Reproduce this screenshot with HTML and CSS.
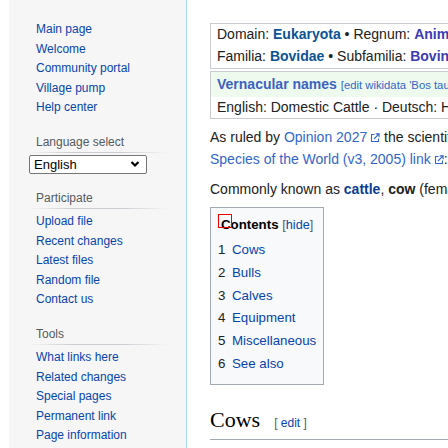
FILE: index.html
```html
<!DOCTYPE html>
<html lang="en">
<head>
<meta charset="utf-8">
<title>Bos taurus</title>
<link rel="stylesheet" href="styles.css">
</head>
<body>
<div class="page">
  <div class="gutter"></div>
  <nav class="sidebar">
    <ul class="links first">
      <li><a href="#">Main page</a></li>
      <li><a href="#">Welcome</a></li>
      <li><a href="#">Community portal</a></li>
      <li><a href="#">Village pump</a></li>
      <li><a href="#">Help center</a></li>
    </ul>
    <div class="portal">
      <h3>Language select</h3>
      <div class="select"><span>English</span><svg class="chev" width="10" height="8" viewBox="0 0 10 8"><polyline points="1.5,2 5,5.5 8.5,2" fill="none" stroke="#000" stroke-width="2.2"/></svg></div>
    </div>
    <div class="portal">
      <h3>Participate</h3>
      <ul class="links">
        <li><a href="#">Upload file</a></li>
        <li><a href="#">Recent changes</a></li>
        <li><a href="#">Latest files</a></li>
        <li><a href="#">Random file</a></li>
        <li><a href="#">Contact us</a></li>
      </ul>
    </div>
    <div class="portal">
      <h3>Tools</h3>
      <ul class="links">
        <li><a href="#">What links here</a></li>
        <li><a href="#">Related changes</a></li>
        <li><a href="#">Special pages</a></li>
        <li><a href="#">Permanent link</a></li>
        <li><a href="#">Page information</a></li>
      </ul>
    </div>
  </nav>
  <main class="content">
    <div class="taxo">
      <div class="line">Domain: <a class="tx" href="#">Eukaryota</a> • Regnum: <a class="tx v" href="#">Animalia</a> • Phylum: <a class="tx" href="#">Chordata</a> • Classis: <a class="tx" href="#">Mammalia</a></div>
      <div class="line">Familia: <a class="tx" href="#">Bovidae</a> • Subfamilia: <a class="tx v" href="#">Bovinae</a> • Tribus: <a class="tx" href="#">Bovini</a> • Genus: <a class="tx" href="#">Bos</a></div>
    </div>
    <div class="vn">
      <div class="vn-head"><span class="vn-title">Vernacular names</span> <span class="vn-edit">[edit wikidata 'Bos taurus']</span></div>
      <div class="vn-body">English: Domestic Cattle · Deutsch: Hausrind · Español: Vaca doméstica</div>
    </div>
    <p class="para">As ruled by <a class="ext" href="#">Opinion 2027<svg class="exticon" width="10" height="10" viewBox="0 0 10 10"><path d="M4.5 1.5H1.5v7h7V5.5" fill="none" stroke="#36c" stroke-width="1.1"/><path d="M4 6L8.8 1.2M5.8 0.9h3.3v3.3" fill="none" stroke="#36c" stroke-width="1.1"/></svg></a> the scientific name of the domestic cattle is, according to Mammal<br><a class="ext" href="#">Species of the World (v3, 2005) link<svg class="exticon" width="10" height="10" viewBox="0 0 10 10"><path d="M4.5 1.5H1.5v7h7V5.5" fill="none" stroke="#36c" stroke-width="1.1"/><path d="M4 6L8.8 1.2M5.8 0.9h3.3v3.3" fill="none" stroke="#36c" stroke-width="1.1"/></svg></a>: Bos taurus</p>
    <p class="para">Commonly known as <a class="strong" href="#">cattle</a>, <b>cow</b> (female), bull (male) or calf (young).</p>
    <div class="toc">
      <span class="toc-focus"></span>
      <div class="toc-title"><b>Contents</b> <span class="toc-hide">[<a href="#">hide</a>]</span></div>
      <ul class="toc-list">
        <li><span class="num">1</span><a href="#">Cows</a></li>
        <li><span class="num">2</span><a href="#">Bulls</a></li>
        <li><span class="num">3</span><a href="#">Calves</a></li>
        <li><span class="num">4</span><a href="#">Equipment</a></li>
        <li><span class="num">5</span><a href="#">Miscellaneous</a></li>
        <li><span class="num">6</span><a href="#">See also</a></li>
      </ul>
    </div>
    <h2 class="section">Cows<span class="editsection">[ <a href="#">edit</a> ]</span></h2>
  </main>
</div>
</body>
</html>
```
FILE: styles.css
```css
html, body {
  margin: 0;
  padding: 0;
  overflow: hidden;
  background: #fff;
}
body {
  font-family: "Liberation Sans", Arial, sans-serif;
  color: #202122;
}
a {
  color: #0645ad;
  text-decoration: none;
}
.page {
  display: flex;
  width: 1100px;
  min-height: 448px;
}
.gutter {
  width: 9px;
  flex: none;
  background: #fff;
}
.sidebar {
  width: 177px;
  flex: none;
  background: #f6f6f6;
  padding: 20px 0 0 19px;
  box-sizing: border-box;
  font-size: 12px;
}
.links {
  list-style: none;
  margin: 0;
  padding: 0 0 0 8px;
}
.links li {
  line-height: 19.5px;
  white-space: nowrap;
}
.portal {
  width: 140px;
  margin-top: 16px;
}
.portal h3 {
  margin: 0;
  font-size: 12px;
  font-weight: normal;
  color: #54595d;
  line-height: 16px;
  padding: 0 0 2px 8px;
  background-image: linear-gradient(to right, rgba(200,204,209,0) 0, #c8ccd1 33%, #c8ccd1 66%, rgba(200,204,209,0) 100%);
  background-repeat: no-repeat;
  background-position: bottom left;
  background-size: 100% 1px;
  padding-bottom: 3px;
}
.portal .links {
  margin-top: 3.5px;
}
.select {
  margin: 2px 0 0 1px;
  width: 118px;
  height: 19px;
  box-sizing: border-box;
  border: 1px solid #767676;
  border-radius: 2px;
  background: #fff;
  display: flex;
  align-items: center;
  justify-content: space-between;
  padding: 0 6px 0 4px;
  font-size: 13px;
  color: #000;
}
.chev {
  display: block;
}
.content {
  flex: none;
  width: 880px;
  border-left: 1px solid #a7d7f9;
  padding: 23px 0 0 23px;
  font-size: 14px;
  background: #fff;
}
.taxo {
  border: 1px solid #c8ccd1;
  padding: 0 6px 1px;
}
.taxo .line {
  line-height: 21.5px;
  white-space: nowrap;
}
.tx {
  font-weight: bold;
  color: #0b5394;
}
.tx.v {
  color: #3b3bb3;
}
.vn {
  margin-top: 2px;
  margin-bottom: 4px;
  border: 1px solid #c8ccd1;
}
.vn-head {
  background: #eefaee;
  line-height: 24px;
  padding: 0 6px;
  white-space: nowrap;
}
.vn-title {
  font-weight: bold;
  color: #3c62c0;
}
.vn-edit {
  font-size: 11.3px;
  color: #3366cc;
}
.vn-body {
  line-height: 21px;
  padding: 0 6px;
  white-space: nowrap;
}
.para {
  margin: 7px 0;
  line-height: 22.4px;
  white-space: nowrap;
}
.ext {
  color: #3366cc;
}
.exticon {
  margin-left: 3px;
  vertical-align: -1px;
}
.strong {
  font-weight: bold;
  color: #0b3d91;
}
.toc {
  position: relative;
  width: max-content;
  margin-top: 7px;
  border: 1px solid #a2a9b1;
  background: #f8f9fa;
  padding: 7px 7px 9px;
  font-size: 13.3px;
}
.toc-focus {
  position: absolute;
  left: 7px;
  top: 6px;
  width: 14px;
  height: 14px;
  box-sizing: border-box;
  border: 1px solid #e00;
}
.toc-title {
  text-align: center;
  line-height: 20px;
  color: #000;
}
.toc-hide {
  font-size: 12.7px;
  color: #54595d;
}
.toc-list {
  list-style: none;
  margin: 4px 0 0;
  padding: 0;
}
.toc-list li {
  line-height: 22.68px;
  white-space: nowrap;
}
.num {
  color: #202122;
  padding-right: 6.6px;
}
.section {
  margin: 21px 0 0;
  padding: 0 0 1px;
  font-family: "Liberation Serif", "Times New Roman", serif;
  font-weight: normal;
  font-size: 22px;
  line-height: 28.6px;
  color: #000;
  border-bottom: 1px solid #a2a9b1;
}
.editsection {
  font-family: "Liberation Sans", Arial, sans-serif;
  font-size: 12px;
  margin-left: 14px;
  color: #54595d;
}
```
